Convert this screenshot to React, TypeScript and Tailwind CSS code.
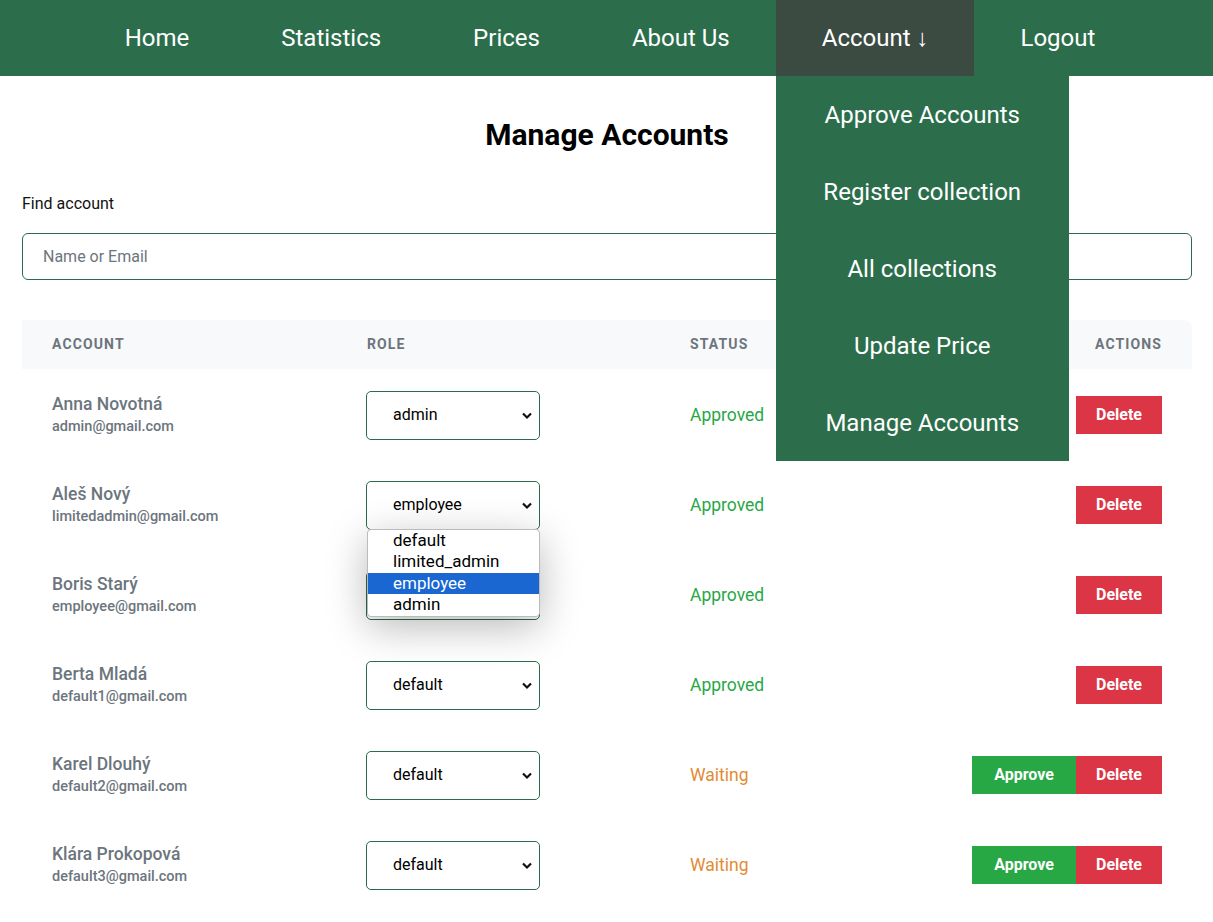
import React from "react";

const navItems = ["Home", "Statistics", "Prices", "About Us", "Account ↓", "Logout"];
const menuItems = ["Approve Accounts", "Register collection", "All collections", "Update Price", "Manage Accounts"];

interface Account {
  name: string;
  email: string;
  role: string;
  status: "Approved" | "Waiting";
}

const accounts: Account[] = [
  { name: "Anna Novotná", email: "admin@gmail.com", role: "admin", status: "Approved" },
  { name: "Aleš Nový", email: "limitedadmin@gmail.com", role: "employee", status: "Approved" },
  { name: "Boris Starý", email: "employee@gmail.com", role: "employee", status: "Approved" },
  { name: "Berta Mladá", email: "default1@gmail.com", role: "default", status: "Approved" },
  { name: "Karel Dlouhý", email: "default2@gmail.com", role: "default", status: "Waiting" },
  { name: "Klára Prokopová", email: "default3@gmail.com", role: "default", status: "Waiting" },
];

const roles = ["default", "limited_admin", "employee", "admin"];

const RoleSelect = ({ value, open }: { value: string; open?: boolean }) => (
  <div className="relative w-[174px]">
    <div className="h-[49px] w-full rounded-[5px] border border-[#2d6a4a] bg-white pl-[26px] flex items-center text-[16px] text-black">
      {value}
      <svg className="absolute right-[7px] top-[20px]" width="12" height="9" viewBox="0 0 12 9">
        <path d="M2 2.5 L6 6.5 L10 2.5" fill="none" stroke="#111" strokeWidth="2.2" />
      </svg>
    </div>
    {open && (
      <div className="absolute left-[1px] top-[48px] z-20 w-[173px] rounded-[4px] border border-[#bbb] bg-white shadow-[0_10px_40px_rgba(0,0,0,0.28)]">
        {roles.map((r) => (
          <div
            key={r}
            className={`h-[21.5px] pl-[25px] text-[17px] leading-[21.5px] ${
              r === value ? "bg-[#1a67d2] text-white" : "text-black"
            }`}
          >
            {r}
          </div>
        ))}
      </div>
    )}
  </div>
);

export default function App() {
  return (
    <div className="min-h-[922px] bg-white font-['Roboto',sans-serif]">
      <nav className="relative z-30 flex h-[76px] justify-center bg-[#2c6e4b] pl-[7px]">
        {navItems.map((item) => {
          const active = item.startsWith("Account");
          return (
            <div
              key={item}
              className={`relative flex items-center px-[46px] text-[24px] text-white ${
                active ? "bg-[#3b4b42]" : ""
              }`}
            >
              {item}
              {active && (
                <div className="absolute left-0 top-[76px] w-[293px] bg-[#2c6e4b]">
                  {menuItems.map((m) => (
                    <div key={m} className="flex h-[77px] items-center justify-center text-[24px] text-white">
                      {m}
                    </div>
                  ))}
                </div>
              )}
            </div>
          );
        })}
      </nav>

      <main className="pl-[22px] pr-[21px] pt-[41px]">
        <h1 className="text-center text-[30px] font-bold text-black leading-[36px]">Manage Accounts</h1>

        <label className="mt-[39px] block text-[16px] text-[#111]">Find account</label>
        <input
          placeholder="Name or Email"
          className="mt-[17px] h-[47px] w-full rounded-[6px] border border-[#2d6a4a] px-[20px] text-[16px] placeholder:text-[#6c757d] outline-none"
        />

        <div className="mt-[40px]">
          <div className="grid h-[49px] grid-cols-[315px_323px_1fr_auto] items-center rounded-tr-[8px] bg-[#f8f9fa] text-[14px] font-bold tracking-[0.08em] text-[#6c757d]">
            <div className="px-[30px]">ACCOUNT</div>
            <div className="px-[30px]">ROLE</div>
            <div className="px-[30px]">STATUS</div>
            <div className="px-[30px]">ACTIONS</div>
          </div>

          {accounts.map((a, i) => (
            <div key={a.email} className="grid h-[90px] grid-cols-[315px_323px_1fr_auto] items-center pt-[2px]">
              <div className="px-[30px]">
                <div className="text-[17.5px] font-medium leading-[22px] text-[#6c757d]">{a.name}</div>
                <div className="mt-[2px] text-[14.5px] font-medium leading-[20px] text-[#6c757d]">{a.email}</div>
              </div>
              <div className="px-[29px]">
                <RoleSelect value={a.role} open={i === 1} />
              </div>
              <div
                className={`px-[30px] text-[17.5px] ${
                  a.status === "Approved" ? "text-[#28a745]" : "text-[#e28b34]"
                }`}
              >
                {a.status}
              </div>
              <div className="flex justify-end px-[30px]">
                {a.status === "Waiting" && (
                  <button className="h-[38px] w-[104px] bg-[#28a745] text-[16px] font-bold text-white">Approve</button>
                )}
                <button className="h-[38px] w-[86px] bg-[#dc3545] text-[16px] font-bold text-white">Delete</button>
              </div>
            </div>
          ))}
        </div>
      </main>
    </div>
  );
}
